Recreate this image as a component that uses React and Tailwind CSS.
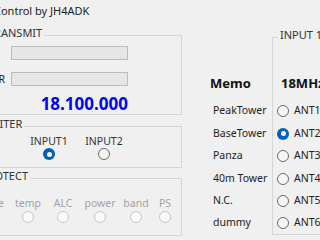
import React from 'react';

const font = { fontFamily: '"Noto Sans", "Open Sans", sans-serif' };

const Radio = ({ checked, disabled }) => {
  if (checked) {
    return (
      <div className="w-[12px] h-[12px] rounded-full bg-[#005fb8] flex items-center justify-center shrink-0">
        <div className="w-[5px] h-[5px] rounded-full bg-white" />
      </div>
    );
  }
  if (disabled) {
    return <div className="w-[12px] h-[12px] rounded-full border border-[#c6c6c6] bg-[#fafafa] shrink-0" />;
  }
  return <div className="w-[12px] h-[12px] rounded-full border border-[#6b6b6b] bg-[#f6f6f6] shrink-0" />;
};

const memos = [
  { memo: 'PeakTower', ant: 'ANT1', h: 'h-[22px]' },
  { memo: 'BaseTower', ant: 'ANT2', h: 'h-[23px]', checked: true },
  { memo: 'Panza', ant: 'ANT3', h: 'h-[22px]' },
  { memo: '40m Tower', ant: 'ANT4', h: 'h-[23px]' },
  { memo: 'N.C.', ant: 'ANT5', h: 'h-[22px]' },
  { memo: 'dummy', ant: 'ANT6', h: 'h-[22px]' },
];

const protects = [
  { label: 'drive', w: 'w-[21px]', mr: 'mr-[8px]' },
  { label: 'temp', w: 'w-[36px]' },
  { label: 'ALC', w: 'w-[34px]' },
  { label: 'power', w: 'w-[40px]' },
  { label: 'band', w: 'w-[32px]' },
  { label: 'PS', w: 'w-[26px]' },
];

export default function App() {
  return (
    <div className="w-[320px] h-[240px] overflow-hidden bg-[#f0f0f0] text-[10.5px] text-[#222]" style={font}>
      {/* title */}
      <div className="pt-[4px] leading-[14px] ml-[-6px] whitespace-nowrap text-[11px]">Control by JH4ADK</div>

      <div className="flex items-start">
        {/* left groups */}
        <div className="w-[202px] ml-[-20px] mt-[8px] shrink-0">
          <fieldset className="border border-[#d6d6d6] px-0">
            <legend className="ml-[5px] px-[2px] pb-[4px] leading-[14px] text-[11px] text-[#333]">TRANSMIT</legend>
            <div className="w-[148px]">
              <div className="flex items-center mt-[2px] h-[14px]">
                <div className="w-[30px] pl-[2px] leading-[14px]">Po</div>
                <div className="w-[117px] h-[14px] border border-[#bcbcbc] bg-[#e6e6e6]" />
              </div>
              <div className="flex items-center mt-[12px] h-[14px]">
                <div className="w-[30px] pl-[2px] leading-[14px]">SWR</div>
                <div className="w-[117px] h-[14px] border border-[#bcbcbc] bg-[#e6e6e6]" />
              </div>
              <div className="mt-[8px] leading-[20px] text-right pr-[1px] text-[17px] font-bold text-[#0000ff]">18.100.000</div>
            </div>
          </fieldset>

          <fieldset className="border border-[#d6d6d6] mt-[2px] px-0">
            <legend className="ml-[-3px] px-[2px] pb-[4px] leading-[14px] text-[11px] text-[#333]">LIMITER</legend>
            <div className="flex pl-[46px] gap-[11px] pb-[7px]">
              <div className="w-[44px] flex flex-col items-center">
                <div className="leading-[13px] text-[#333]">INPUT1</div>
                <Radio checked />
              </div>
              <div className="w-[44px] flex flex-col items-center">
                <div className="leading-[13px] text-[#333]">INPUT2</div>
                <Radio />
              </div>
            </div>
          </fieldset>

          <fieldset className="border border-[#d6d6d6] mt-[1px] px-0">
            <legend className="ml-[-2px] px-[2px] pb-[4px] leading-[14px] text-[11px] text-[#333]">PROTECT</legend>
            <div className="flex mt-[9px] pb-[12px]">
              {protects.map((p) => (
                <div key={p.label} className={`${p.w} ${p.mr || ''} flex flex-col items-center`}>
                  <div className="leading-[14px] whitespace-nowrap text-[#a3a3a3]">{p.label}</div>
                  <div className="mt-[1px]">
                    <Radio disabled />
                  </div>
                </div>
              ))}
            </div>
          </fieldset>
        </div>

        {/* memo column */}
        <div className="w-[90px] pl-[31px] mt-[28px] shrink-0">
          <div className="ml-[-3px] text-[13px] font-bold leading-[18px] text-[#111] mt-[28px]">Memo</div>
          <div className="mt-[8px]">
            {memos.map((m) => (
              <div key={m.memo} className={`${m.h} flex items-center whitespace-nowrap`}>
                {m.memo}
              </div>
            ))}
          </div>
        </div>

        {/* input 1 */}
        <div className="shrink-0 w-[80px] mt-[10px]">
          <fieldset className="border border-[#d6d6d6] px-0">
            <legend className="ml-[5px] px-[2px] pb-[4px] leading-[14px] text-[11px] text-[#333]">INPUT 1</legend>
            <div className="pl-[8px] text-[13px] font-bold leading-[18px] text-[#111] mt-[28px]">18MHz</div>
            <div className="mt-[8px] pl-[4px]">
              {memos.map((m) => (
                <div key={m.ant} className={`${m.h} flex items-center gap-[5px] whitespace-nowrap`}>
                  <Radio checked={m.checked} />
                  <span>{m.ant}</span>
                </div>
              ))}
            </div>
          </fieldset>
        </div>
      </div>
    </div>
  );
}
